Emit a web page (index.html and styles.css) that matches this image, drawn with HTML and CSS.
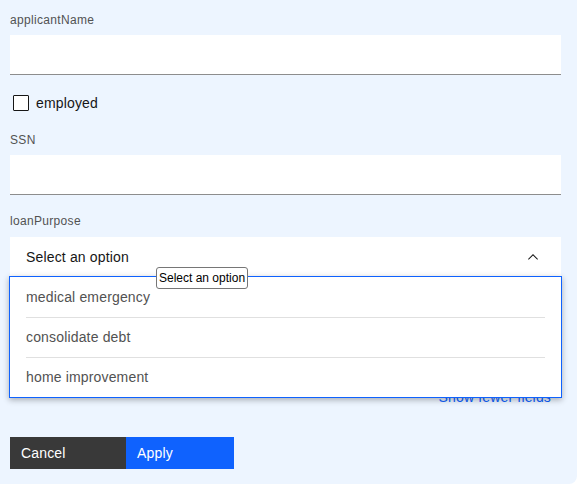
FILE: index.html
```html
<!DOCTYPE html>
<html lang="en">
<head>
<meta charset="utf-8">
<title>Loan form</title>
<link rel="stylesheet" href="styles.css">
</head>
<body>
<div class="panel">
  <div class="field">
    <label class="label">applicantName</label>
    <div class="input"></div>
  </div>
  <div class="checkbox-row">
    <span class="box"></span>
    <span class="check-label">employed</span>
  </div>
  <div class="field">
    <label class="label">SSN</label>
    <div class="input"></div>
  </div>
  <div class="field field-select">
    <label class="label">loanPurpose</label>
    <div class="dropdown">
      <span class="dropdown-text">Select an option</span>
      <svg class="chevron" width="16" height="16" viewBox="0 0 16 16"><path d="M8 5 L13 10 L12.3 10.7 L8 6.4 L3.7 10.7 L3 10 Z" fill="#161616"/></svg>
      <ul class="menu">
        <li class="item"><span class="item-text">medical emergency</span></li>
        <li class="item"><span class="item-text">consolidate debt</span></li>
        <li class="item"><span class="item-text">home improvement</span></li>
      </ul>
      <div class="tooltip">Select an option</div>
    </div>
  </div>
  <div class="more"><a class="more-link">Show fewer fields</a></div>
  <div class="actions">
    <button class="btn btn-secondary">Cancel</button>
    <button class="btn btn-primary">Apply</button>
  </div>
</div>
</body>
</html>
```
FILE: styles.css
```css
html, body {
  margin: 0;
  padding: 0;
  background: #ffffff;
}
body {
  font-family: "Liberation Sans", Arial, sans-serif;
  color: #161616;
}
.panel {
  width: 577px;
  box-sizing: border-box;
  background: #edf5ff;
  padding: 12px 16px 15px 10px;
  border-radius: 0 0 8px 0;
  display: flex;
  flex-direction: column;
}
.field {
  display: flex;
  flex-direction: column;
}
.label {
  font-size: 12px;
  line-height: 16px;
  letter-spacing: 0.32px;
  color: #525252;
  margin-bottom: 7px;
}
.input {
  height: 40px;
  box-sizing: border-box;
  background: #ffffff;
  border-bottom: 1px solid #8d8d8d;
}
.checkbox-row {
  display: flex;
  align-items: flex-start;
  margin: 18px 0 19px;
  height: 20px;
}
.box {
  width: 16px;
  height: 16px;
  box-sizing: border-box;
  border: 1px solid #161616;
  border-radius: 1px;
  margin: 2px 7px 0 3px;
  background: #ffffff;
}
.check-label {
  font-size: 14px;
  line-height: 20px;
  letter-spacing: 0.16px;
  color: #161616;
}
.field-select {
  margin-top: 18px;
}
.field-select .label {
  margin-bottom: 8px;
}
.dropdown {
  position: relative;
  height: 40px;
  background: #ffffff;
  display: flex;
  align-items: center;
  justify-content: space-between;
  padding: 0 20px 0 16px;
}
.dropdown-text {
  font-size: 14px;
  line-height: 18px;
  letter-spacing: 0.16px;
  color: #161616;
}
.chevron {
  display: block;
}
.menu {
  position: absolute;
  left: -1px;
  right: -1px;
  top: 39px;
  margin: 0;
  padding: 0;
  list-style: none;
  background: #ffffff;
  border: 1px solid #0f62fe;
  box-shadow: 0 2px 6px rgba(0, 0, 0, 0.3);
  z-index: 2;
}
.item {
  margin: 0 16px;
  height: 40px;
  box-sizing: border-box;
  display: flex;
  align-items: center;
}
.item + .item {
  border-top: 1px solid #e0e0e0;
}
.item-text {
  font-size: 14px;
  line-height: 18px;
  letter-spacing: 0.16px;
  color: #525252;
}
.item + .item .item-text {
  margin-top: -1px;
}
.tooltip {
  position: absolute;
  left: 146px;
  top: 30px;
  height: 22px;
  box-sizing: border-box;
  padding: 0 2px;
  border: 1px solid #767676;
  border-radius: 3px;
  background: #ffffff;
  font-size: 12px;
  line-height: 20px;
  color: #000000;
  white-space: nowrap;
  z-index: 3;
}
.more {
  display: flex;
  justify-content: flex-end;
  margin-top: 111px;
  padding-right: 10px;
}
.more-link {
  font-size: 14px;
  line-height: 18px;
  letter-spacing: 0.16px;
  color: #0f62fe;
}
.actions {
  display: flex;
  margin-top: 31px;
}
.btn {
  height: 32px;
  border: none;
  margin: 0;
  padding: 0 11px;
  font-family: "Liberation Sans", Arial, sans-serif;
  font-size: 14px;
  line-height: 18px;
  letter-spacing: 0.16px;
  color: #ffffff;
  text-align: left;
  display: flex;
  align-items: center;
}
.btn-secondary {
  width: 116px;
  background: #393939;
}
.btn-primary {
  width: 108px;
  background: #0f62fe;
}
```
